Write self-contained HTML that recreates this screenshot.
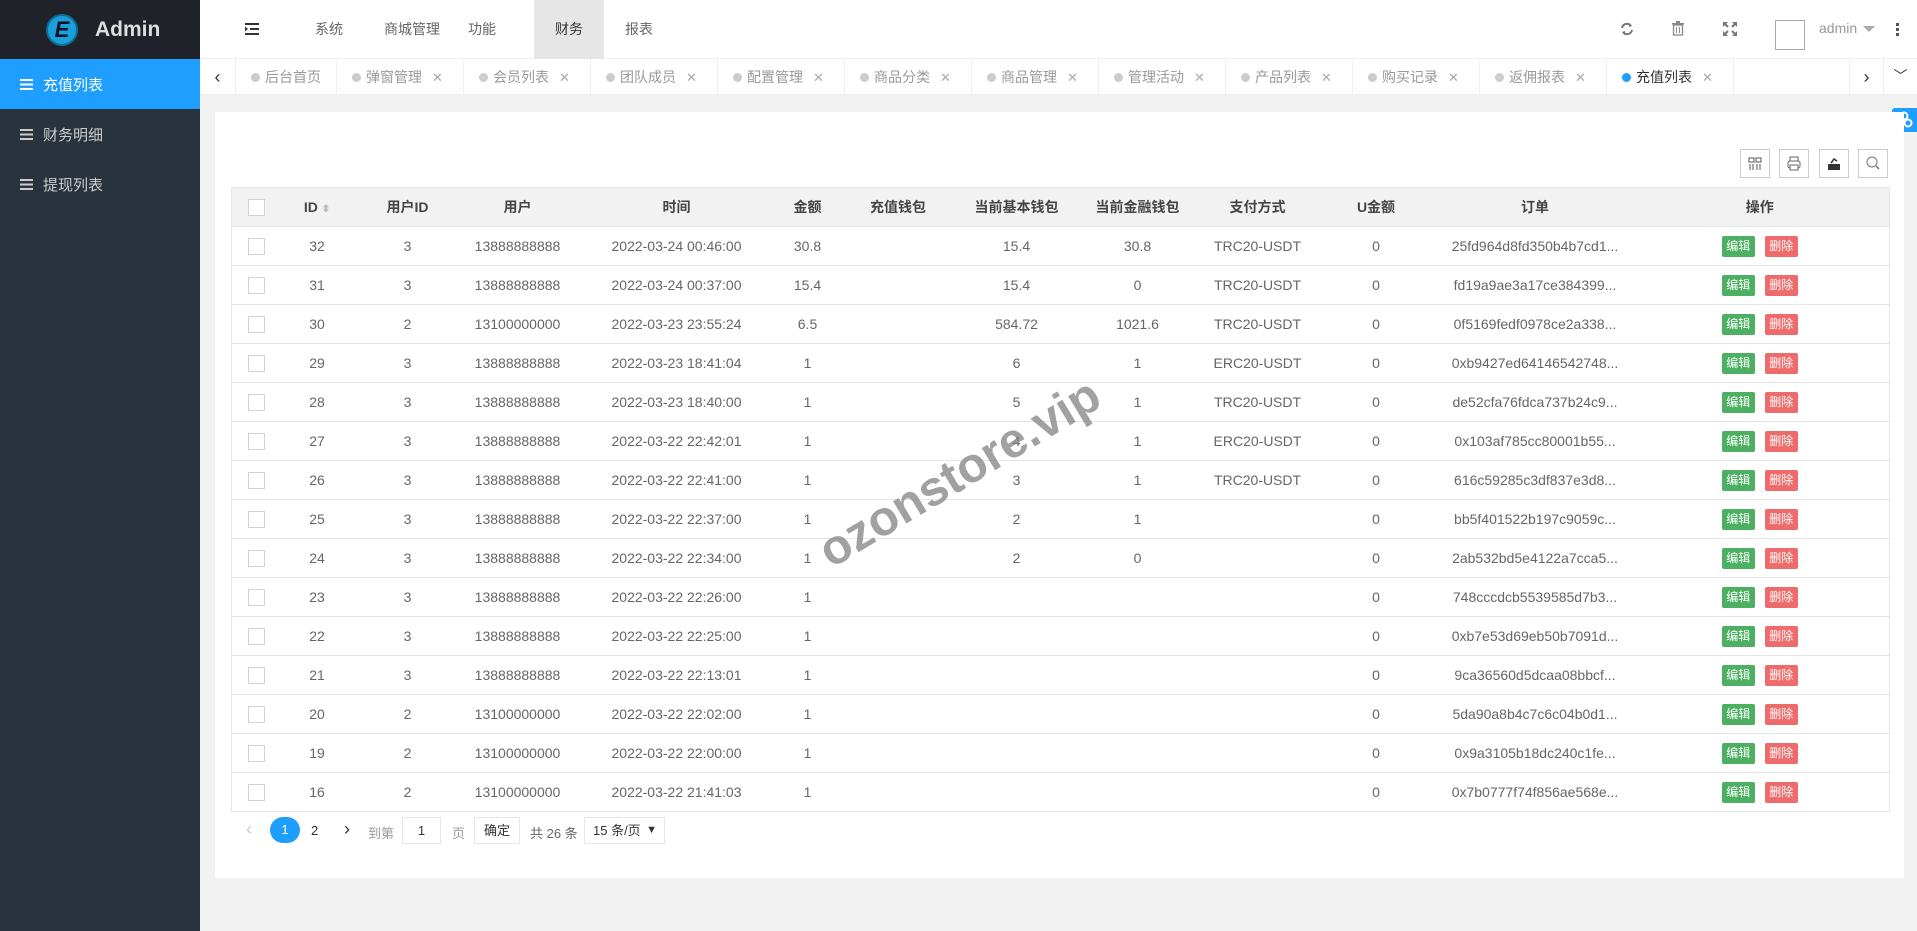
<!DOCTYPE html>
<html><head><meta charset="utf-8">
<style>
*{box-sizing:border-box;margin:0;padding:0}
body{width:1917px;height:931px;overflow:hidden;background:#f2f2f2;font-family:"Liberation Sans","Noto Sans CJK SC",sans-serif;font-size:14px;color:#666;position:relative}
.side{position:absolute;left:0;top:0;width:200px;height:931px;background:#28333e}
.logo{height:59px;background:#20222a;display:flex;align-items:center;padding-left:46px;color:#ddd;font-size:21px;font-weight:bold}
.logo .e{width:32px;height:32px;border-radius:50%;background:#1aa0d8;border:2px solid #0d6d96;margin-right:17px;color:#112;display:flex;align-items:center;justify-content:center;font-size:22px;font-weight:900;font-style:italic}
.mi{height:50px;display:flex;align-items:center;padding-left:20px;color:#ccc;font-size:15px}
.mi.on{background:#1e9fff;color:#fff}
.mi i{display:inline-block;width:13px;height:11px;margin-right:10px;background:repeating-linear-gradient(#ccc 0 2px,transparent 2px 4.5px);position:relative}
.mi.on i{background:repeating-linear-gradient(#fff 0 2px,transparent 2px 4.5px)}
.top{position:absolute;left:200px;top:0;right:0;height:59px;background:#fff;border-bottom:1px solid #f0f0f0}
.nav{position:absolute;top:0;height:59px;line-height:59px;color:#666;font-size:14px}
.tabs{position:absolute;left:200px;top:59px;right:0;height:36px;background:#fff;border-bottom:1px solid #eee}
.tab{position:absolute;top:0;height:36px;line-height:36px;border-right:1px solid #f0f0f0;color:#999;font-size:14px;padding-left:15px;white-space:nowrap}
.tab b{display:inline-block;width:9px;height:9px;border-radius:50%;background:#ccc;margin-right:5px;vertical-align:0}
.tab s{text-decoration:none;margin-left:10px;color:#aaa;font-size:13px}
.card{position:absolute;left:215px;top:112px;width:1689px;height:766px;background:#fff}
.tb{position:absolute;top:149px;width:30px;height:29px;border:1px solid #ccc;background:#fff}
table{position:absolute;left:231px;top:187px;width:1658px;border-collapse:collapse;table-layout:fixed}
th,td{height:39px;border-bottom:1px solid #e6e6e6;text-align:center;font-size:14px;white-space:nowrap;overflow:hidden;padding:0}
th{background:#f2f2f2;color:#444;font-weight:bold;height:39px}
table{border:1px solid #e6e6e6}
.cb{display:inline-block;width:17px;height:17px;border:1px solid #d2d2d2;background:#fff;vertical-align:middle}
.bt{display:inline-block;width:33px;height:21px;line-height:21px;color:#fff;font-size:12px;border-radius:2px;vertical-align:middle}
.g{background:#4caf62}.r{background:#ee6b6b;margin-left:10px}
.pg{position:absolute;top:817px;font-size:13px;color:#333}
</style></head><body>
<div class="side">
<div class="logo"><div class="e">E</div>Admin</div>
<div class="mi on"><i></i>充值列表</div>
<div class="mi"><i></i>财务明细</div>
<div class="mi"><i></i>提现列表</div>
</div>
<div class="top">
<svg style="position:absolute;left:45px;top:23px" width="14" height="12"><rect x="0" y="0" width="14" height="2" fill="#333"/><rect x="5" y="5" width="9" height="2" fill="#333"/><rect x="0" y="10" width="14" height="2" fill="#333"/><path d="M0 3.5 L3 6 L0 8.5Z" fill="#333"/></svg>
<div class="nav" style="left:115px">系统</div>
<div class="nav" style="left:184px">商城管理</div>
<div class="nav" style="left:268px">功能</div>
<div class="nav" style="left:334px;width:70px;background:#e6e6e6;text-align:center;color:#333">财务</div>
<div class="nav" style="left:425px">报表</div>
<svg style="position:absolute;left:1420px;top:22px" width="14" height="14" viewBox="0 0 14 14"><path d="M2 6 A5 5 0 0 1 11 4 M12 8 A5 5 0 0 1 3 10" stroke="#777" stroke-width="2" fill="none"/><path d="M9 1 L12 4 L9 5Z M5 13 L2 10 L5 9Z" fill="#777"/></svg>
<svg style="position:absolute;left:1472px;top:21px" width="12" height="15"><rect x="0" y="2" width="12" height="1.5" fill="#888"/><rect x="4" y="0" width="4" height="2" fill="#888"/><rect x="1.5" y="4" width="9" height="10" fill="none" stroke="#888" stroke-width="1.3"/><path d="M4.5 6v6M7.5 6v6" stroke="#888"/></svg>
<svg style="position:absolute;left:1523px;top:22px" width="14" height="14"><path d="M1 1L5 5M13 1L9 5M1 13L5 9M13 13L9 9" stroke="#777" stroke-width="2"/><path d="M0 0h5L0 5ZM14 0h-5l5 5ZM0 14h5L0 9ZM14 14h-5l5-5Z" fill="#777"/></svg>
<div style="position:absolute;left:1575px;top:20px;width:30px;height:30px;border:1px solid #aaa"></div>
<div style="position:absolute;left:1619px;top:20px;color:#999;font-size:14px">admin</div>
<div style="position:absolute;left:1663px;top:26px;border:6px solid transparent;border-top:6px solid #aaa"></div>
<div style="position:absolute;left:1696px;top:23px;width:3px;height:13px;background:repeating-linear-gradient(#555 0 3px,transparent 3px 5px)"></div>
</div>
<div class="tabs">
<div style="position:absolute;left:0;top:0;width:36px;height:36px;border-right:1px solid #eee;text-align:center;line-height:36px;color:#333;font-size:18px">‹</div>
<div class="tab" style="left:36px;width:101px"><b></b>后台首页</div>
<div class="tab" style="left:137px;width:127px"><b></b>弹窗管理<s>✕</s></div>
<div class="tab" style="left:264px;width:127px"><b></b>会员列表<s>✕</s></div>
<div class="tab" style="left:391px;width:127px"><b></b>团队成员<s>✕</s></div>
<div class="tab" style="left:518px;width:127px"><b></b>配置管理<s>✕</s></div>
<div class="tab" style="left:645px;width:127px"><b></b>商品分类<s>✕</s></div>
<div class="tab" style="left:772px;width:127px"><b></b>商品管理<s>✕</s></div>
<div class="tab" style="left:899px;width:127px"><b></b>管理活动<s>✕</s></div>
<div class="tab" style="left:1026px;width:127px"><b></b>产品列表<s>✕</s></div>
<div class="tab" style="left:1153px;width:127px"><b></b>购买记录<s>✕</s></div>
<div class="tab" style="left:1280px;width:127px"><b></b>返佣报表<s>✕</s></div>
<div class="tab" style="left:1407px;width:127px;color:#333"><b style="background:#1e9fff"></b>充值列表<s>✕</s></div>
<div style="position:absolute;left:1649px;top:0;width:34px;height:36px;border-left:1px solid #eee;text-align:center;line-height:36px;color:#333;font-size:18px">›</div>
<div style="position:absolute;left:1683px;top:0;width:34px;height:36px;border-left:1px solid #eee;text-align:center;line-height:34px;color:#333;font-size:14px">﹀</div>
</div>
<div style="position:absolute;left:1892px;top:108px;width:25px;height:24px;background:#1e9fff;border-radius:3px 0 0 3px"><svg width="25" height="24"><circle cx="12" cy="8" r="3.5" stroke="#fff" stroke-width="2" fill="none"/><circle cx="8" cy="15" r="3.5" stroke="#fff" stroke-width="2" fill="none"/><circle cx="16" cy="15" r="3.5" stroke="#fff" stroke-width="2" fill="none"/></svg></div>
<div class="card"></div>
<div class="tb" style="left:1740px"><svg width="28" height="27"><rect x="8" y="8" width="5" height="4" fill="none" stroke="#555"/><rect x="15" y="8" width="5" height="4" fill="none" stroke="#555"/><path d="M9 14v6M12 14v6M16 14v6M19 14v6" stroke="#555"/></svg></div>
<div class="tb" style="left:1779px"><svg width="28" height="27"><rect x="8" y="11" width="12" height="7" rx="2" fill="none" stroke="#666"/><rect x="10" y="7" width="8" height="4" fill="none" stroke="#666"/><rect x="10" y="15" width="8" height="5" fill="#fff" stroke="#666"/></svg></div>
<div class="tb" style="left:1819px"><svg width="28" height="27"><rect x="8" y="14" width="12" height="6" fill="#333"/><path d="M11 13 L14 9 L17 11" stroke="#333" fill="none" stroke-width="1.5"/></svg></div>
<div class="tb" style="left:1858px"><svg width="28" height="27"><circle cx="13" cy="12" r="5" fill="none" stroke="#777"/><path d="M17 16l3 3" stroke="#777" stroke-width="1.5"/></svg></div>
<table>
<colgroup><col style="width:49px"><col style="width:73px"><col style="width:108px"><col style="width:112px"><col style="width:206px"><col style="width:56px"><col style="width:125px"><col style="width:112px"><col style="width:130px"><col style="width:110px"><col style="width:127px"><col style="width:191px"><col style="width:259px"></colgroup>
<tr><th><span class="cb"></span></th><th>ID <span style="color:#bbb;font-size:10px">⬍</span></th><th>用户ID</th><th>用户</th><th>时间</th><th>金额</th><th>充值钱包</th><th>当前基本钱包</th><th>当前金融钱包</th><th>支付方式</th><th>U金额</th><th>订单</th><th>操作</th></tr>
<tr><td><span class="cb"></span></td><td>32</td><td>3</td><td>13888888888</td><td>2022-03-24 00:46:00</td><td>30.8</td><td></td><td>15.4</td><td>30.8</td><td>TRC20-USDT</td><td>0</td><td>25fd964d8fd350b4b7cd1...</td><td><span class="bt g">编辑</span><span class="bt r">删除</span></td></tr>
<tr><td><span class="cb"></span></td><td>31</td><td>3</td><td>13888888888</td><td>2022-03-24 00:37:00</td><td>15.4</td><td></td><td>15.4</td><td>0</td><td>TRC20-USDT</td><td>0</td><td>fd19a9ae3a17ce384399...</td><td><span class="bt g">编辑</span><span class="bt r">删除</span></td></tr>
<tr><td><span class="cb"></span></td><td>30</td><td>2</td><td>13100000000</td><td>2022-03-23 23:55:24</td><td>6.5</td><td></td><td>584.72</td><td>1021.6</td><td>TRC20-USDT</td><td>0</td><td>0f5169fedf0978ce2a338...</td><td><span class="bt g">编辑</span><span class="bt r">删除</span></td></tr>
<tr><td><span class="cb"></span></td><td>29</td><td>3</td><td>13888888888</td><td>2022-03-23 18:41:04</td><td>1</td><td></td><td>6</td><td>1</td><td>ERC20-USDT</td><td>0</td><td>0xb9427ed64146542748...</td><td><span class="bt g">编辑</span><span class="bt r">删除</span></td></tr>
<tr><td><span class="cb"></span></td><td>28</td><td>3</td><td>13888888888</td><td>2022-03-23 18:40:00</td><td>1</td><td></td><td>5</td><td>1</td><td>TRC20-USDT</td><td>0</td><td>de52cfa76fdca737b24c9...</td><td><span class="bt g">编辑</span><span class="bt r">删除</span></td></tr>
<tr><td><span class="cb"></span></td><td>27</td><td>3</td><td>13888888888</td><td>2022-03-22 22:42:01</td><td>1</td><td></td><td>4</td><td>1</td><td>ERC20-USDT</td><td>0</td><td>0x103af785cc80001b55...</td><td><span class="bt g">编辑</span><span class="bt r">删除</span></td></tr>
<tr><td><span class="cb"></span></td><td>26</td><td>3</td><td>13888888888</td><td>2022-03-22 22:41:00</td><td>1</td><td></td><td>3</td><td>1</td><td>TRC20-USDT</td><td>0</td><td>616c59285c3df837e3d8...</td><td><span class="bt g">编辑</span><span class="bt r">删除</span></td></tr>
<tr><td><span class="cb"></span></td><td>25</td><td>3</td><td>13888888888</td><td>2022-03-22 22:37:00</td><td>1</td><td></td><td>2</td><td>1</td><td></td><td>0</td><td>bb5f401522b197c9059c...</td><td><span class="bt g">编辑</span><span class="bt r">删除</span></td></tr>
<tr><td><span class="cb"></span></td><td>24</td><td>3</td><td>13888888888</td><td>2022-03-22 22:34:00</td><td>1</td><td></td><td>2</td><td>0</td><td></td><td>0</td><td>2ab532bd5e4122a7cca5...</td><td><span class="bt g">编辑</span><span class="bt r">删除</span></td></tr>
<tr><td><span class="cb"></span></td><td>23</td><td>3</td><td>13888888888</td><td>2022-03-22 22:26:00</td><td>1</td><td></td><td></td><td></td><td></td><td>0</td><td>748cccdcb5539585d7b3...</td><td><span class="bt g">编辑</span><span class="bt r">删除</span></td></tr>
<tr><td><span class="cb"></span></td><td>22</td><td>3</td><td>13888888888</td><td>2022-03-22 22:25:00</td><td>1</td><td></td><td></td><td></td><td></td><td>0</td><td>0xb7e53d69eb50b7091d...</td><td><span class="bt g">编辑</span><span class="bt r">删除</span></td></tr>
<tr><td><span class="cb"></span></td><td>21</td><td>3</td><td>13888888888</td><td>2022-03-22 22:13:01</td><td>1</td><td></td><td></td><td></td><td></td><td>0</td><td>9ca36560d5dcaa08bbcf...</td><td><span class="bt g">编辑</span><span class="bt r">删除</span></td></tr>
<tr><td><span class="cb"></span></td><td>20</td><td>2</td><td>13100000000</td><td>2022-03-22 22:02:00</td><td>1</td><td></td><td></td><td></td><td></td><td>0</td><td>5da90a8b4c7c6c04b0d1...</td><td><span class="bt g">编辑</span><span class="bt r">删除</span></td></tr>
<tr><td><span class="cb"></span></td><td>19</td><td>2</td><td>13100000000</td><td>2022-03-22 22:00:00</td><td>1</td><td></td><td></td><td></td><td></td><td>0</td><td>0x9a3105b18dc240c1fe...</td><td><span class="bt g">编辑</span><span class="bt r">删除</span></td></tr>
<tr><td><span class="cb"></span></td><td>16</td><td>2</td><td>13100000000</td><td>2022-03-22 21:41:03</td><td>1</td><td></td><td></td><td></td><td></td><td>0</td><td>0x7b0777f74f856ae568e...</td><td><span class="bt g">编辑</span><span class="bt r">删除</span></td></tr>
</table>
<div style="position:absolute;left:823px;top:527px;transform:rotate(-31deg);transform-origin:left center;font-size:49px;font-weight:bold;color:rgba(130,130,130,0.75);white-space:nowrap">ozonstore.vip</div>
<div class="pg" style="left:246px;top:819px;color:#ccc;font-size:18px">‹</div>
<div class="pg" style="left:270px;top:817px;width:30px;height:26px;border-radius:13px;background:#1e9fff;color:#fff;text-align:center;line-height:26px">1</div>
<div class="pg" style="left:311px;top:823px">2</div>
<div class="pg" style="left:344px;top:819px;font-size:18px">›</div>
<div class="pg" style="left:368px;top:823px;color:#999">到第</div>
<div class="pg" style="left:402px;top:817px;width:39px;height:27px;border:1px solid #e6e6e6;text-align:center;line-height:25px">1</div>
<div class="pg" style="left:452px;top:823px;color:#999">页</div>
<div class="pg" style="left:474px;top:817px;width:46px;height:27px;border:1px solid #e6e6e6;text-align:center;line-height:25px">确定</div>
<div class="pg" style="left:530px;top:823px;color:#666">共 26 条</div>
<div class="pg" style="left:584px;top:817px;width:81px;height:27px;border:1px solid #e6e6e6;line-height:25px;padding-left:8px">15 条/页 <span style="position:absolute;right:7px;font-size:11px">▼</span></div>
</body></html>
